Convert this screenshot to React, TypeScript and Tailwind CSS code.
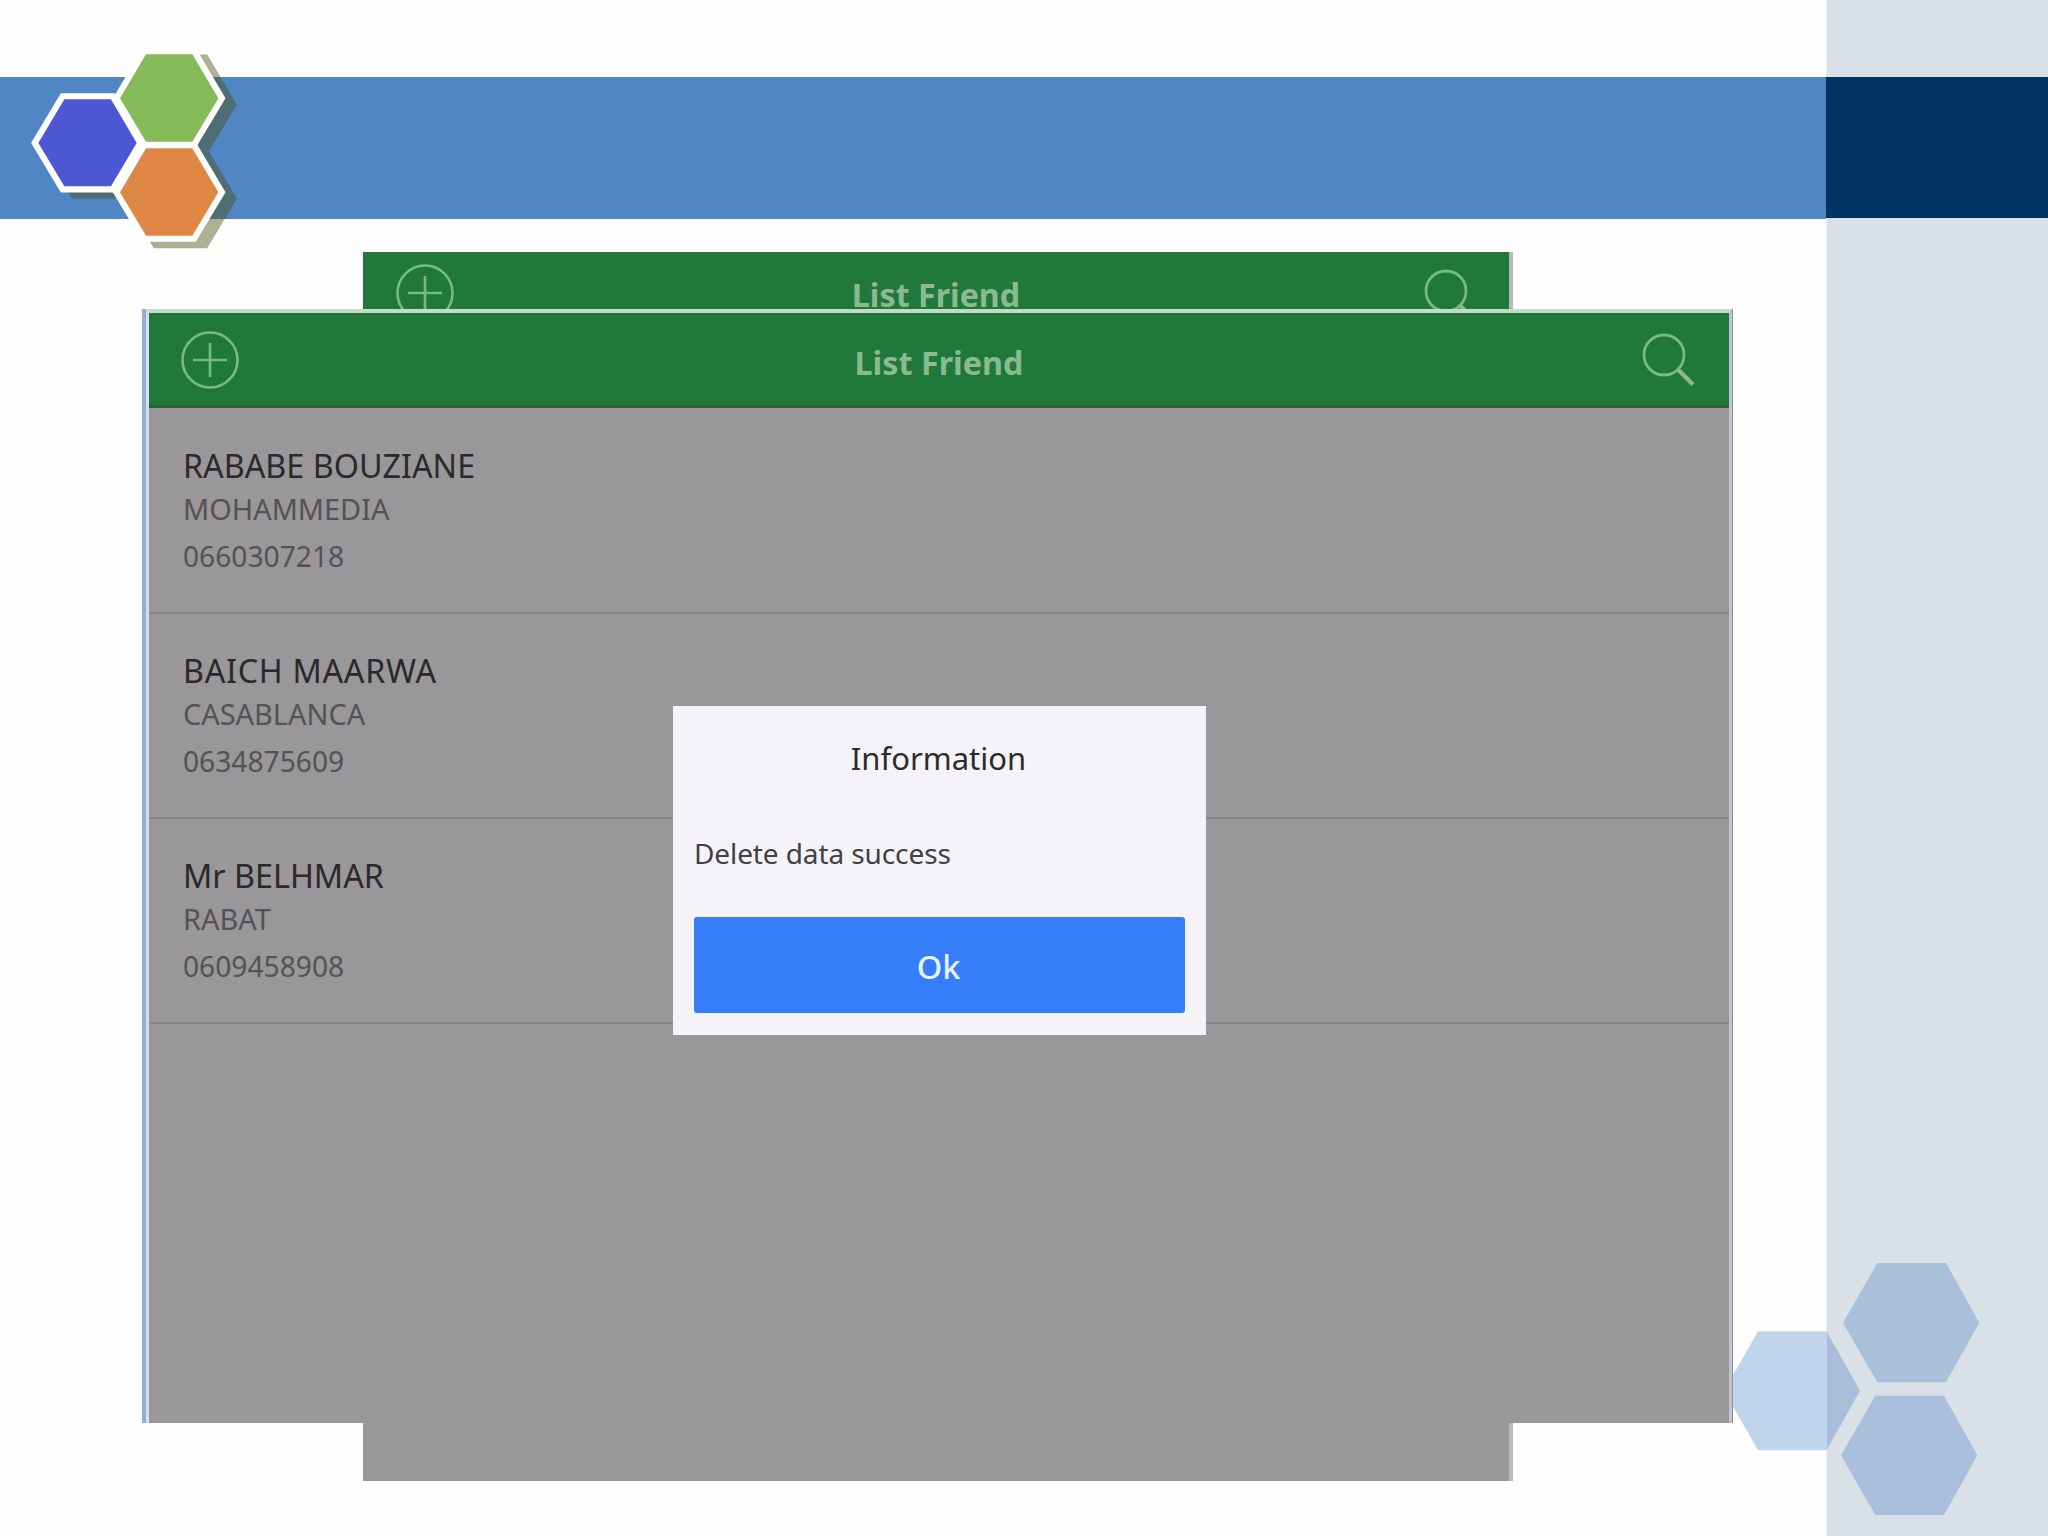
interface Friend {
  name: string;
  city: string;
  phone: string;
  nameSpacing?: string;
}

const FRIENDS: Friend[] = [
  { name: "RABABE BOUZIANE", city: "MOHAMMEDIA", phone: "0660307218" },
  {
    name: "BAICH MAARWA",
    city: "CASABLANCA",
    phone: "0634875609",
    nameSpacing: "tracking-[0.700px]",
  },
  { name: "Mr BELHMAR", city: "RABAT", phone: "0609458908" },
];

const LOGO_SHAPES = [
  { points: "115,339 193,208 333,208 410,339 333,469 193,469", fill: "#4e57d2" },
  { points: "360,205 438,73 577,73 655,205 577,335 438,335", fill: "#85ba58" },
  { points: "360,487 438,355 577,355 655,487 577,617 438,617", fill: "#df8846" },
];

function Logo() {
  return (
    <svg viewBox="0 69 840 600" className="absolute left-0 top-[53px] h-[200px] w-[280px]">
      <g transform="translate(34 19)" opacity="0.45" fill="#505016" stroke="#505016" strokeWidth="37">
        {LOGO_SHAPES.map((shape) => (
          <polygon key={shape.fill} points={shape.points} />
        ))}
      </g>
      {LOGO_SHAPES.map((shape) => (
        <polygon key={shape.fill} points={shape.points} fill="#fff" stroke="#fff" strokeWidth="37" />
      ))}
      {LOGO_SHAPES.map((shape) => (
        <polygon key={shape.fill} points={shape.points} fill={shape.fill} />
      ))}
    </svg>
  );
}

function CornerHexagons() {
  return (
    <svg viewBox="0 0 1044 918" className="absolute bottom-0 right-0 h-[306px] w-[348px]">
      <polygon points="72,482 174,304 380,304 380,661 174,661" fill="#bfd3ea" />
      <polygon points="380,304 480,482 380,661" fill="#a9bfd9" />
      <polygon points="429,278 532,99 738,99 838,278 738,457 532,457" fill="#a9c0db" />
      <polygon points="423,676 526,497 732,497 832,676 732,855 526,855" fill="#a9bfdb" />
    </svg>
  );
}

function AddIcon() {
  return (
    <svg viewBox="0 0 60 60" className="size-[60px]" fill="none" stroke="#79b987" strokeWidth="2.6">
      <circle cx="30" cy="30" r="27.5" />
      <path d="M13 30h34M30 13v34" />
    </svg>
  );
}

function SearchIcon() {
  return (
    <svg viewBox="0 0 60 60" className="size-[60px]" fill="none" stroke="#79b987" strokeWidth="2.8">
      <circle cx="25" cy="25" r="20" />
      <path d="M39 39.500L54 54.500" stroke="#8fb591" strokeWidth="4.200" />
    </svg>
  );
}

function BackWindow() {
  return (
    <div className="absolute left-[363px] top-[252px] flex h-[1229px] w-[1150px] flex-col border-r-4 border-[#b9b8bb] bg-[#999799]">
      <header className="flex h-[92px] items-start justify-between bg-[#20793a] pl-[32px] pr-[30px]">
        <div className="pt-[11px]">
          <AddIcon />
        </div>
        <h2 className="mr-[4px] pt-[21px] text-[32.200px] font-bold leading-[44px] text-[#8bba92]">
          List Friend
        </h2>
        <div className="-mr-[2px] pt-[14px]">
          <SearchIcon />
        </div>
      </header>
    </div>
  );
}

function FriendRow({ friend }: { friend: Friend }) {
  return (
    <li className="h-[205px] border-b-2 border-[#888688] pl-[34px] pt-[34px]">
      <p className={`text-[32.300px] leading-[44px] text-[#2b292c] ${friend.nameSpacing ?? ""}`}>
        {friend.name}
      </p>
      <p className="text-[28.900px] leading-[44px] text-[#545255]">{friend.city}</p>
      <p className="text-[28.200px] leading-[50px] text-[#545255]">{friend.phone}</p>
    </li>
  );
}

function FriendWindow() {
  return (
    <div className="absolute left-[142px] top-[309px] flex h-[1114px] w-[1591px] border-l-4 border-r border-l-[#92b0d4] border-r-[#8f8da0]">
      <div className="flex flex-1 flex-col border-l-[3px] border-r-[3px] border-t-4 border-l-[#d5dfee] border-r-[#c3c3cb] border-t-[#c4dcc6] bg-[#999799]">
        <header className="flex h-[95px] items-start justify-between border-b-[3px] border-[#2c6038] bg-[#20793a] pl-[31px] pr-[30px]">
          <div className="pt-[17px]">
            <AddIcon />
          </div>
          <h1 className="mr-px pt-[27px] text-[32.300px] font-bold leading-[44px] text-[#8bba92]">
            List Friend
          </h1>
          <div className="pt-[17px]">
            <SearchIcon />
          </div>
        </header>
        <ul className="pt-px">
          {FRIENDS.map((friend) => (
            <FriendRow key={friend.phone} friend={friend} />
          ))}
        </ul>
      </div>
    </div>
  );
}

function InfoDialog() {
  return (
    <div
      role="dialog"
      className="absolute left-[673px] top-[706px] flex h-[329px] w-[533px] flex-col bg-[#f5f3f7]"
    >
      <h2 className="h-[104px] border-b border-[#efedf1] pr-[2px] pt-[30px] text-center text-[31px] leading-[44px] text-[#2d2b2f]">
        Information
      </h2>
      <div className="flex flex-col px-[21px] pt-[21px]">
        <p className="text-[28px] leading-[44px] tracking-[-0.100px] text-[#424044]">
          Delete data success
        </p>
        <button className="mt-[42px] h-[96px] rounded-[3px] bg-[#367dfa] pr-[2px] pt-[5px] text-[32.500px] font-medium text-[#e4f4ff]">
          Ok
        </button>
      </div>
    </div>
  );
}

export default function App() {
  return (
    <div className="relative flex h-[1536px] w-[2048px] overflow-hidden bg-[#fefefe] font-['Noto_Sans',sans-serif]">
      <main className="w-[1826px] pt-[77px]">
        <div className="h-[142px] bg-[#5086c4]" />
      </main>
      <aside className="flex-1 border-l border-[#eef1f4] bg-[#d9e0e7] pt-[77px]">
        <div className="-ml-px h-[141px] bg-[#003463]" />
      </aside>
      <Logo />
      <CornerHexagons />
      <BackWindow />
      <FriendWindow />
      <InfoDialog />
    </div>
  );
}
